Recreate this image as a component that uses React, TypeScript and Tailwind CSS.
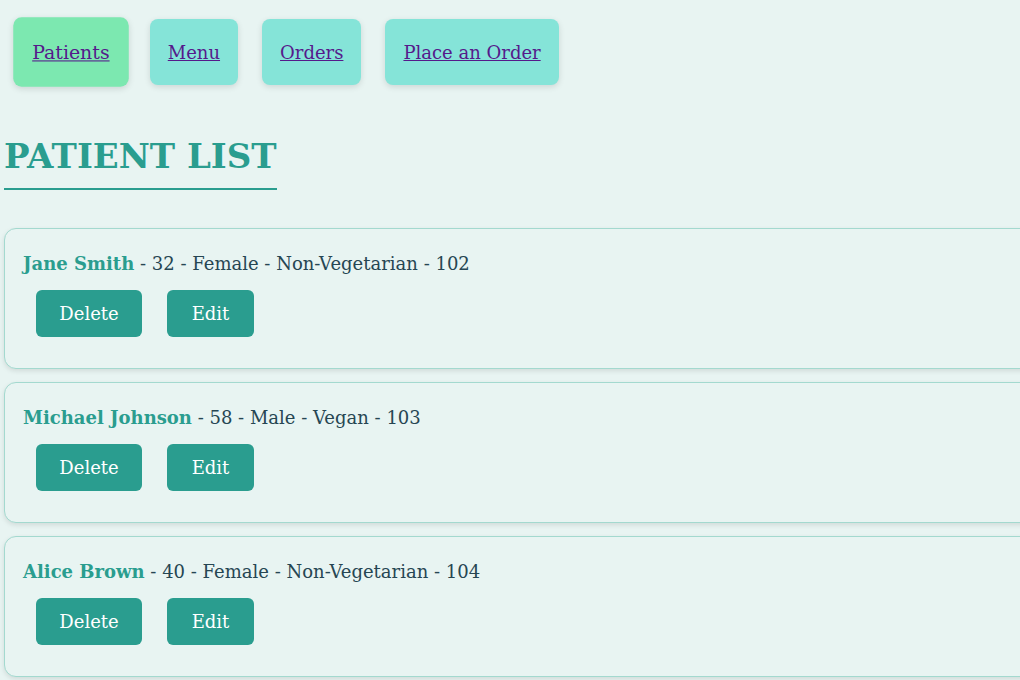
import React from "react";

const patients = [
  { name: "Jane Smith", details: " - 32 - Female - Non-Vegetarian - 102" },
  { name: "Michael Johnson", details: " - 58 - Male - Vegan - 103" },
  { name: "Alice Brown", details: " - 40 - Female - Non-Vegetarian - 104" },
];

const navItems = [
  { label: "Patients", active: true },
  { label: "Menu", active: false },
  { label: "Orders", active: false },
  { label: "Place an Order", active: false },
];

export default function App() {
  return (
    <div
      className="min-h-screen w-full overflow-hidden bg-[#e8f4f2]"
      style={{ fontFamily: '"DejaVu Serif", "Liberation Serif", serif' }}
    >
      <nav className="flex items-start gap-[24px] pl-[16px] pt-[19px]">
        {navItems.map((n) => (
          <div
            key={n.label}
            className={`flex h-[66px] items-center rounded-lg px-[18px] shadow-[0_2px_6px_rgba(0,0,0,0.12)] ${
              n.active ? "scale-105 bg-[#7ce8b0]" : "bg-[#85e4d8]"
            }`}
          >
            <a href="#" className="text-[18px] text-[#551a8b] underline">
              {n.label}
            </a>
          </div>
        ))}
      </nav>
      <div className="pl-[4px] pt-[51px]">
        <h1 className="inline-block border-b-2 border-[#2a9d8f] pb-[12px] text-[34px] font-bold leading-[40px] text-[#2a9d8f]">
          PATIENT LIST
        </h1>
      </div>
      <div className="mt-[38px] flex w-[1100px] flex-col gap-[13px] pl-[4px]">
        {patients.map((p) => (
          <div
            key={p.name}
            className="h-[141px] rounded-xl border border-[#a3d9cf] bg-[#e8f4f2] px-[18px] pt-[22px] shadow-[0_2px_5px_rgba(0,0,0,0.1)]"
          >
            <div className="text-[18px] leading-[26px] text-[#264653]">
              <span className="font-bold text-[#2a9d8f]">{p.name}</span>
              {p.details}
            </div>
            <div className="mt-[13px] flex gap-[25px] pl-[13px]">
              <button className="h-[47px] w-[106px] rounded-md bg-[#2a9d8f] text-[18px] text-white">
                Delete
              </button>
              <button className="h-[47px] w-[87px] rounded-md bg-[#2a9d8f] text-[18px] text-white">
                Edit
              </button>
            </div>
          </div>
        ))}
      </div>
    </div>
  );
}
